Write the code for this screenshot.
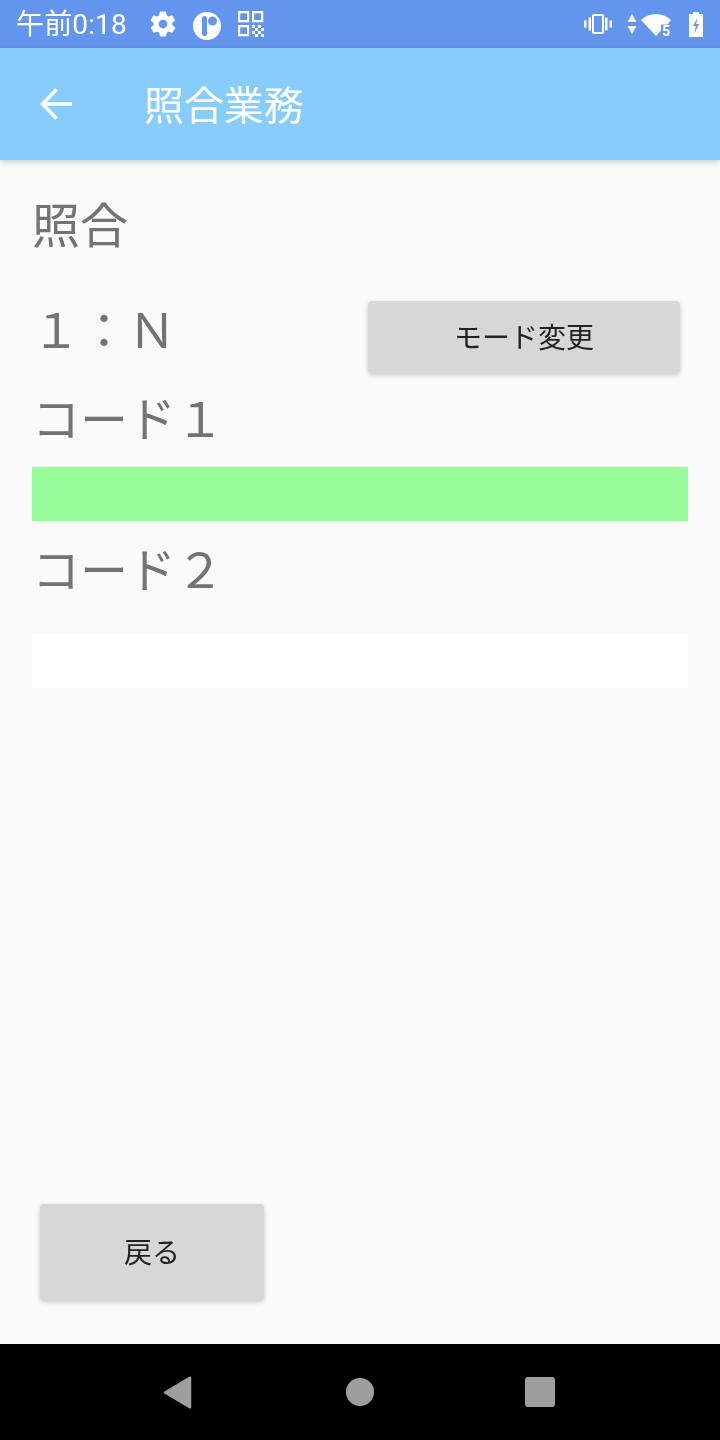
<div class="screen">
  <header class="status">
    <div class="status-left">
      <span class="time">午前0:18</span>
      <svg class="i gear" viewBox="0 0 24 24"><path fill="#fff" d="M19.4 13c.1-.3.1-.7.1-1s0-.7-.1-1l2.1-1.6c.2-.2.2-.4.1-.6l-2-3.5c-.1-.2-.4-.3-.6-.2l-2.5 1c-.5-.4-1.1-.7-1.7-1l-.4-2.7c0-.2-.2-.4-.5-.4h-4c-.2 0-.4.2-.5.4l-.4 2.7c-.6.2-1.1.6-1.7 1l-2.5-1c-.2-.1-.5 0-.6.2l-2 3.5c-.1.2 0 .5.1.6L4.5 11c0 .3-.1.7-.1 1s0 .7.1 1l-2.1 1.6c-.2.2-.2.4-.1.6l2 3.5c.1.2.4.3.6.2l2.5-1c.5.4 1.1.7 1.7 1l.4 2.7c0 .2.2.4.5.4h4c.2 0 .4-.2.5-.4l.4-2.7c.6-.2 1.1-.6 1.7-1l2.5 1c.2.1.5 0 .6-.2l2-3.5c.1-.2 0-.5-.1-.6L19.4 13zM12 15.5a3.5 3.5 0 1 1 0-7 3.5 3.5 0 0 1 0 7z"/></svg>
      <svg class="i logo" viewBox="0 0 28 28"><circle cx="14" cy="14" r="14" fill="#fff"/><rect x="9" y="4" width="5" height="20" rx="2.500" fill="#6495ed"/><circle cx="19.500" cy="9" r="4.500" fill="#6495ed"/></svg>
      <svg class="i qr" viewBox="0 0 26 26">
        <path fill="none" stroke="#fff" stroke-width="2.200" d="M1.100 1.100h9v9h-9zM15.100 1.100h9v9h-9zM1.100 15.100h9v9h-9z"/>
        <path fill="#fff" d="M14 14h3v3h-3zM20 14h3v3h-3zM17 17h3v3h-3zM23 17h3v3h-3zM14 20h3v3h-3zM20 20h3v3h-3zM17 23h3v3h-3zM23 23h3v3h-3z"/>
      </svg>
    </div>
    <div class="status-right">
      <svg class="vib" viewBox="0 0 28 20"><path fill="none" stroke="#fff" stroke-width="2" d="M10 1h8a1 1 0 0 1 1 1v16a1 1 0 0 1-1 1h-8a1 1 0 0 1-1-1V2a1 1 0 0 1 1-1z"/><path fill="#fff" d="M4.500 3.500h2.500v13H4.500zM21 3.500h2.500v13H21zM0 6.500h2.500v7H0zM25.500 6.500H28v7h-2.500z"/></svg>
      <svg class="arrows" viewBox="0 0 10 20"><path fill="#fff" d="M5 0l4.500 8H.5zM.5 12h9L5 20z"/></svg>
      <span class="wifi">
        <svg viewBox="0 0 30 22"><path fill="#fff" d="M0 6C4 2 9.500 0 15 0s11 2 15 6l-3.500 4.500H20V16.500L15 22z"/></svg>
        <span class="wifi-num">5</span>
      </span>
      <svg class="batt" viewBox="0 0 14 25"><path fill="#fff" fill-rule="evenodd" d="M4 0h6v2h4v23H0V2h4zM8.500 5.500L4 14h2.800L5.500 21.500l4.500-9.500H7.200z"/></svg>
    </div>
  </header>

  <div class="appbar">
    <svg class="back" viewBox="0 0 32 32"><path fill="none" stroke="#fff" stroke-width="3.400" d="M32 16H3M16.500 1.500L2.500 16l14 14.500"/></svg>
    <h1>照合業務</h1>
  </div>

  <main>
    <div class="heading">照合</div>
    <div class="mode-row">
      <span class="mode">１：Ｎ</span>
      <button class="btn mode-btn">モード変更</button>
    </div>
    <div class="label l1">コード１</div>
    <div class="field green"></div>
    <div class="label l2">コード２</div>
    <div class="field white"></div>
    <button class="btn back-btn">戻る</button>
  </main>

  <nav>
    <svg class="nav-back" viewBox="0 0 30 34"><path fill="#9e9e9e" d="M27 .6c1-.6 2.200 0 2.200 1.200v30.400c0 1.200-1.200 1.800-2.200 1.200L1.500 18c-1-.6-1-1.400 0-2z"/></svg>
    <span class="nav-home"></span>
    <span class="nav-recent"></span>
  </nav>
</div>

<style>
  :global(body) { margin: 0; }
  .screen {
    width: 720px;
    height: 1440px;
    display: flex;
    flex-direction: column;
    background: #fafafa;
    overflow: hidden;
    font-family: "Noto Sans CJK JP", "Noto Sans", sans-serif;
  }
  .status {
    height: 48px;
    flex: none;
    background: #6495ed;
    display: flex;
    align-items: center;
    justify-content: space-between;
    padding: 0 17px 0 16px;
    color: #fff;
  }
  .status-left, .status-right { display: flex; align-items: center; }
  .time { font-size: 28px; width: 132px; white-space: nowrap; font-family: Roboto, "Noto Sans CJK JP", sans-serif; line-height: 48px; letter-spacing: .15px; margin-top: 2px; will-change: transform; }
  .i { display: block; }
  .gear { width: 30px; height: 30px; margin-right: 15px; }
  .logo { width: 28px; height: 28px; margin-right: 17px; margin-top: 3px; }
  .qr { width: 26px; height: 26px; }
  .vib { width: 28px; height: 20px; margin-right: 15px; }
  .arrows { width: 10px; height: 20px; margin-right: 4px; }
  .wifi { position: relative; width: 32px; height: 22px; margin-right: 16px; margin-top: 1px; }
  .wifi svg { position: absolute; left: 0; top: 0; width: 30px; height: 22px; }
  .wifi-num { position: absolute; left: 21px; top: 10px; font: 700 14px/14px Roboto, sans-serif; }
  .batt { width: 14px; height: 25px; }

  .appbar {
    height: 112px;
    flex: none;
    background: #87cdfb;
    display: flex;
    align-items: center;
    box-shadow: 0 2px 6px rgba(0,0,0,.18);
    position: relative;
    z-index: 1;
    padding-left: 40px;
  }
  .back { width: 32px; height: 32px; margin-right: 72px; }
  h1 {
    margin: 0 0 3px;
    font-size: 40px;
    font-weight: 400;
    line-height: 56px;
    color: #fff;
    letter-spacing: -.1px;
    will-change: transform;
  }

  main {
    flex: 1;
    display: flex;
    flex-direction: column;
    padding: 0 32px 44px;
    color: #737373;
    font-size: 48px;
    min-height: 0;
    will-change: transform;
  }
  .heading { line-height: 70px; margin-top: 27px; }
  .mode-row {
    display: flex;
    justify-content: space-between;
    margin-top: 44px;
    height: 73px;
    padding-right: 8px;
  }
  .mode { line-height: 52px; white-space: nowrap; }
  .btn {
    border: 0;
    border-radius: 4px;
    background: #d6d7d7;
    color: #222;
    font-family: inherit;
    font-size: 28px;
    padding: 0;
    box-shadow: 0 2px 5px rgba(0,0,0,.2);
  }
  .mode-btn { width: 312px; height: 72px; padding-bottom: 3px; }
  .label { line-height: 60px; }
  .l1 { margin-top: 12px; }
  .l2 { margin-top: 16px; }
  .field { height: 54px; flex: none; }
  .green { background: #99fe99; margin-top: 21px; }
  .white { background: #fff; margin-top: 37px; }
  .back-btn {
    width: 224px;
    height: 96px;
    margin-left: 8px;
    margin-top: auto;
    padding-bottom: 2px;
  }

  nav {
    height: 96px;
    flex: none;
    background: #000;
    display: flex;
    align-items: center;
    padding-left: 163px;
  }
  .nav-back { width: 29px; height: 33px; margin-right: 154px; }
  .nav-home { width: 28px; height: 28px; border-radius: 50%; background: #9e9e9e; margin-right: 151px; }
  .nav-recent { width: 30px; height: 30px; border-radius: 3px; background: #9e9e9e; }
</style>
